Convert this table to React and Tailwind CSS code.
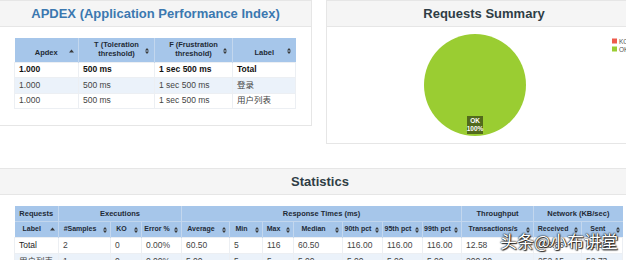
import React from 'react';

// Tableaux du rapport JMeter
const apdexRows = [
  { apdex: '1.000', t: '500 ms', f: '1 sec 500 ms', label: 'Total', total: true },
  { apdex: '1.000', t: '500 ms', f: '1 sec 500 ms', label: '登录' },
  { apdex: '1.000', t: '500 ms', f: '1 sec 500 ms', label: '用户列表' },
];

const statCols = [
  { name: 'Label', w: 44, dir: 'asc' },
  { name: '#Samples', w: 52 },
  { name: 'KO', w: 31 },
  { name: 'Error %', w: 40 },
  { name: 'Average', w: 48 },
  { name: 'Min', w: 33 },
  { name: 'Max', w: 31 },
  { name: 'Median', w: 49 },
  { name: '90th pct', w: 40 },
  { name: '95th pct', w: 40 },
  { name: '99th pct', w: 39 },
  { name: 'Transactions/s', w: 72 },
  { name: 'Received', w: 48 },
  { name: 'Sent', w: 41 },
];

const statRows = [
  { total: true, cells: ['Total', '2', '0', '0.00%', '60.50', '5', '116', '60.50', '116.00', '116.00', '116.00', '12.58', '308.86', '62.85'] },
  { cells: ['用户列表', '1', '0', '0.00%', '5.00', '5', '5', '5.00', '5.00', '5.00', '5.00', '200.00', '252.15', '52.73'] },
];

function SortIcon({ dir }) {
  if (dir === 'asc') {
    return (
      <svg width="5" height="4" viewBox="0 0 5 4">
        <path d="M0 3.5 L2.5 0.5 L5 3.5Z" fill="#3a3a3a" />
      </svg>
    );
  }
  return (
    <svg width="4" height="6" viewBox="0 0 4 6">
      <path d="M0 2.6 L2 0 L4 2.6Z M0 3.4 L2 6 L4 3.4Z" fill="#3a3a3a" />
    </svg>
  );
}

function PanelHeading({ children, blue }) {
  return (
    <div className="h-[26px] flex items-center justify-center bg-[#f5f5f5] border-b border-[#e6e6e6]">
      <span className={blue ? "text-[13px] font-bold text-[#3b78b0]" : "text-[13px] font-bold text-[#2f3d45]"}>{children}</span>
    </div>
  );
}

function ApdexPanel() {
  return (
    <div className="w-[312px] h-[126px] shrink-0 border border-l-0 border-[#e6e6e6] bg-white">
      <PanelHeading blue>APDEX (Application Performance Index)</PanelHeading>
      <div className="pl-[14px] pt-[11px]">
        <table className="table-fixed border-collapse w-[281px] text-[8.5px] text-[#444]">
          <colgroup>
            <col className="w-[64px]" />
            <col className="w-[76px]" />
            <col className="w-[78px]" />
            <col className="w-[63px]" />
          </colgroup>
          <thead>
            <tr className="h-[24px] bg-[#a6c6ea] text-[#1e2a36] font-bold text-[7.5px] leading-[9px]">
              <th className="relative align-bottom pb-[5px] border-r border-[#c3d7ee]">
                Apdex
                <span className="absolute right-[4px] top-[11px] flex"><SortIcon dir="asc" /></span>
              </th>
              <th className="relative align-bottom pb-[4px] border-r border-[#c3d7ee]">
                T (Toleration<br />threshold)
                <span className="absolute right-[5px] top-[10px] flex"><SortIcon /></span>
              </th>
              <th className="relative align-bottom pb-[4px] border-r border-[#c3d7ee]">
                F (Frustration<br />threshold)
                <span className="absolute right-[5px] top-[10px] flex"><SortIcon /></span>
              </th>
              <th className="relative align-bottom pb-[5px]">
                Label
                <span className="absolute right-[5px] top-[10px] flex"><SortIcon /></span>
              </th>
            </tr>
          </thead>
          <tbody>
            {apdexRows.map((r, i) => (
              <tr
                key={i}
                className={
                  (i === 1 ? "bg-[#ebf2fa] " : "bg-white ") +
                  (r.total ? "font-bold text-[#111] " : "") +
                  "h-[15.5px]"
                }
              >
                {[r.apdex, r.t, r.f, r.label].map((c, j) => (
                  <td key={j} className="pl-[4px] border border-[#eceff3] whitespace-nowrap">{c}</td>
                ))}
              </tr>
            ))}
          </tbody>
        </table>
      </div>
    </div>
  );
}

function SummaryPanel() {
  return (
    <div className="w-[316px] h-[144px] shrink-0 ml-[14px] border border-[#e6e6e6] bg-white">
      <PanelHeading>Requests Summary</PanelHeading>
      <svg width="316" height="116" className="block">
        <circle cx="148" cy="58" r="51" fill="#9acd32" />
        <rect x="140" y="89" width="16" height="18" fill="#4a5f1a" opacity="0.9" />
        <text x="148" y="96" textAnchor="middle" fontSize="6.5" fontWeight="bold" fill="#fff" fontFamily="Liberation Sans, sans-serif">OK</text>
        <text x="148" y="104" textAnchor="middle" fontSize="6.5" fontWeight="bold" fill="#fff" fontFamily="Liberation Sans, sans-serif">100%</text>
        <rect x="283" y="10" width="30" height="18" fill="#fff" opacity="0.85" />
        <rect x="285" y="11.5" width="5" height="5" fill="#ee5a4c" />
        <rect x="285" y="19.5" width="5" height="5" fill="#9acd32" />
        <text x="292" y="16.5" fontSize="6.5" fill="#555" fontFamily="Liberation Sans, sans-serif">KO</text>
        <text x="292" y="24.5" fontSize="6.5" fill="#555" fontFamily="Liberation Sans, sans-serif">OK</text>
      </svg>
    </div>
  );
}

function StatisticsPanel() {
  return (
    <div className="w-[640px] mt-[24px] border-t border-[#e6e6e6] bg-white">
      <PanelHeading>Statistics</PanelHeading>
      <div className="pl-[14px] pt-[11px]">
        <table className="table-fixed border-collapse w-[608px] text-[8.5px] text-[#444]">
          <colgroup>
            {statCols.map((c) => (
              <col key={c.name} style={{ width: c.w }} />
            ))}
          </colgroup>
          <thead>
            <tr className="h-[15px] bg-[#a6c6ea] text-[#1e2a36] font-bold text-[7.5px]">
              <th colSpan={1} className="border-r border-[#c3d7ee]">Requests</th>
              <th colSpan={3} className="border-r border-[#c3d7ee]">Executions</th>
              <th colSpan={7} className="border-r border-[#c3d7ee]">Response Times (ms)</th>
              <th colSpan={1} className="border-r border-[#c3d7ee]">Throughput</th>
              <th colSpan={2}>Network (KB/sec)</th>
            </tr>
            <tr className="h-[16px] bg-[#a6c6ea] text-[#1e2a36] font-bold text-[7px] border-t border-[#c3d7ee]">
              {statCols.map((c, i) => (
                <th key={c.name} className={"relative whitespace-nowrap pr-[9px]" + (i < statCols.length - 1 ? " border-r border-[#c3d7ee]" : "")}>
                  {c.name}
                  <span className="absolute right-[3px] top-[5px] flex"><SortIcon dir={c.dir} /></span>
                </th>
              ))}
            </tr>
          </thead>
          <tbody>
            {statRows.map((r, i) => (
              <tr key={i} className={(i === 1 ? "bg-[#ebf2fa] " : "bg-white ") + "h-[16px]"}>
                {r.cells.map((c, j) => (
                  <td key={j} className={"pl-[4px] border border-[#eceff3] whitespace-nowrap" + (r.total && j === 0 ? " text-[#222]" : "")}>{c}</td>
                ))}
              </tr>
            ))}
          </tbody>
        </table>
      </div>
    </div>
  );
}

export default function App() {
  return (
    <div className="relative w-[626px] h-[260px] overflow-hidden bg-white font-['Liberation_Sans','Noto_Sans_CJK_SC',sans-serif]">
      <div className="flex items-start">
        <ApdexPanel />
        <SummaryPanel />
      </div>
      <StatisticsPanel />
      {/* Filigrane */}
      <div className="absolute left-[500px] top-[231px] text-[17px] leading-[20px] text-white font-['Noto_Sans_CJK_SC',sans-serif] [text-shadow:0_0_1px_#000,0_0_2px_#000,1px_1px_1px_#333]">
        头条@小布讲堂
      </div>
    </div>
  );
}
